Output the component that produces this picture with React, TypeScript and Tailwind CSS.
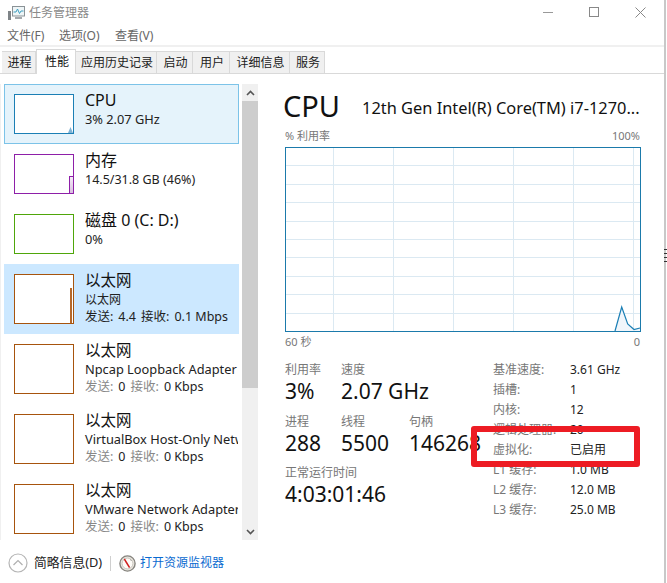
import { ReactNode } from "react";

type SideItem = {
  title: string;
  sub?: string;
  subSize?: string;
  third?: ReactNode;
  color: string;
  tall?: boolean;
  state?: "hover" | "selected";
  spark?: ReactNode;
};

const grayRate = (up: string, down: string, unit: string, dark?: boolean) => (
  <span className="flex">
    <span className={dark ? "text-[#222]" : "text-[#888]"}>发送:</span>
    <span className="ml-[5px] text-[#222]">{up}</span>
    <span className={dark ? "ml-[5px] text-[#222]" : "ml-[5px] text-[#888]"}>接收:</span>
    <span className="ml-[5px] text-[#222]">{down} {unit}</span>
  </span>
);

const items: SideItem[] = [
  {
    title: "CPU",
    sub: "3% 2.07 GHz",
    color: "border-[#1b7fb5]",
    state: "hover",
    spark: (
      <svg width="5" height="6" className="absolute bottom-0 right-0">
        <path d="M0 6 L2.5 0 L5 6 Z" fill="#7fb3d5" />
      </svg>
    ),
  },
  {
    title: "内存",
    sub: "14.5/31.8 GB (46%)",
    subSize: "text-[12.5px]",
    color: "border-[#8e1fa8]",
    spark: <div className="absolute bottom-0 right-0 w-[4px] h-[17px] bg-gradient-to-t from-[#d9bfe0] to-[#f4ecf6] border-l border-t border-[#8e1fa8]" />,
  },
  { title: "磁盘 0 (C: D:)", sub: "0%", color: "border-[#4fa60a]" },
  {
    title: "以太网",
    sub: "以太网",
    subSize: "text-[12px]",
    third: grayRate("4.4", "0.1", "Mbps", true),
    color: "border-[#a7540d]",
    tall: true,
    state: "selected",
    spark: <div className="absolute bottom-0 right-[1px] w-[2px] h-[35px] bg-[#b5682a]" />,
  },
  { title: "以太网", sub: "Npcap Loopback Adapter", third: grayRate("0", "0", "Kbps"), color: "border-[#a7540d]", tall: true },
  { title: "以太网", sub: "VirtualBox Host-Only Network", third: grayRate("0", "0", "Kbps"), color: "border-[#a7540d]", tall: true },
  { title: "以太网", sub: "VMware Network Adapter", third: grayRate("0", "0", "Kbps"), color: "border-[#a7540d]", tall: true },
];

const tabs = [
  { label: "进程", w: "w-[34px]" },
  { label: "性能", w: "w-[40px]", active: true },
  { label: "应用历史记录", w: "w-[81px]" },
  { label: "启动", w: "w-[36px]" },
  { label: "用户", w: "w-[37px]" },
  { label: "详细信息", w: "w-[60px]" },
  { label: "服务", w: "w-[35px]" },
];

const specs = [
  ["基准速度:", "3.61 GHz"],
  ["插槽:", "1"],
  ["内核:", "12"],
  ["逻辑处理器:", "20"],
  ["虚拟化:", "已启用"],
  ["L1 缓存:", "1.0 MB"],
  ["L2 缓存:", "12.0 MB"],
  ["L3 缓存:", "25.0 MB"],
];

const SideRow = ({ item }: { item: SideItem }) => {
  const bg =
    item.state === "hover"
      ? "bg-[#e5f3fb] border border-[#7cc3e8]"
      : item.state === "selected"
        ? "bg-[#cce8ff] border border-[#cce8ff]"
        : "border border-transparent";
  return (
    <div className={`flex shrink-0 w-[235px] overflow-hidden pl-[9px] pt-[9px] ${item.tall ? "h-[70px]" : "h-[60px]"} ${bg}`}>
      <div className={`relative shrink-0 w-[60px] border bg-white ${item.tall ? "h-[50px]" : "h-[40px]"} ${item.color}`}>
        {item.spark}
      </div>
      <div className="ml-[11px] -mt-[5px] whitespace-nowrap">
        <div className={`leading-[22px] text-[#111] ${item.tall ? "text-[15.5px]" : "text-[16px]"}`}>{item.title}</div>
        <div className={`leading-[17px] text-[#222] ${item.subSize ?? "text-[12.8px]"}`}>{item.sub}</div>
        {item.third && <div className="text-[12.5px] leading-[17px]">{item.third}</div>}
      </div>
    </div>
  );
};

const Stat = ({ label, value, w }: { label: string; value: string; w: string }) => (
  <div className={`shrink-0 whitespace-nowrap ${w}`}>
    <div className="text-[12px] leading-[16px] text-[#777]">{label}</div>
    <div className="text-[21px] leading-[26px] text-[#111]">{value}</div>
  </div>
);

const CpuChart = () => (
  <svg width="356" height="185" className="block">
    <rect x="0.5" y="0.5" width="355" height="184" fill="#ffffff" />
    {[48, 108, 168, 228, 288, 348].map((x) => (
      <line key={x} x1={x + 0.5} y1="1" x2={x + 0.5} y2="184" stroke="#dbe9f2" />
    ))}
    {[1, 2, 3, 4, 5, 6, 7, 8, 9].map((n) => (
      <line key={n} x1="1" y1={Math.round(n * 18.4) + 0.5} x2="355" y2={Math.round(n * 18.4) + 0.5} stroke="#dbe9f2" />
    ))}
    <path d="M330 184 L336.7 160 L342.7 177 L349 182.5 L355 181 L355 184 Z" fill="#f1f6fb" stroke="none" />
    <path d="M330 184 L336.7 160 L342.7 177 L349 182.5 L355 181" fill="none" stroke="#1b7fb5" strokeWidth="1.2" />
    <rect x="0.5" y="0.5" width="355" height="184" fill="none" stroke="#1b7aab" />
  </svg>
);

const AppIcon = () => (
  <svg width="17" height="14" viewBox="0 0 17 14" className="shrink-0">
    <rect x="4.5" y="0.5" width="12" height="9.5" fill="#eef5f7" stroke="#8a9296" />
    <path d="M5.5 6 L8 6 L9.5 3 L11.5 7.5 L13 5 L15.5 5" fill="none" stroke="#3f9fc0" strokeWidth="1" />
    <rect x="0" y="5" width="3" height="9" fill="#7f8488" />
    <rect x="7" y="11" width="7" height="2" fill="#a4a9ad" />
  </svg>
);

const MonitorIcon = () => (
  <svg width="17" height="17" viewBox="0 0 17 17" className="shrink-0">
    <circle cx="8.5" cy="8.5" r="7.6" fill="#e9e6df" stroke="#85837d" strokeWidth="1.4" />
    <circle cx="8.5" cy="8.5" r="5.4" fill="#fdfbf7" stroke="#b9b5ac" strokeWidth="0.7" />
    <path d="M5.3 4 L10.6 12.6" stroke="#d0201f" strokeWidth="1.5" />
    <path d="M11.5 4.6 L12.2 5.6" stroke="#777" strokeWidth="1" />
  </svg>
);

export default function App() {
  return (
    <div className="relative w-[667px] h-[583px] overflow-hidden bg-white font-['Noto_Sans','Noto_Sans_CJK_SC',sans-serif]">
      <div className="w-[666px] h-[583px] border-r-2 border-[#c8c8c8] flex flex-col">
        {/* title bar */}
        <div className="flex items-center h-[24px] shrink-0 pl-2 pt-[1px]">
          <AppIcon />
          <span className="ml-[4px] text-[12px] text-[#8a8a8a]">任务管理器</span>
          <div className="ml-auto flex items-center">
            <svg width="11" height="11" className="mr-[35px]"><line x1="0" y1="5.5" x2="10" y2="5.5" stroke="#999" /></svg>
            <svg width="11" height="11" className="mr-[35px]"><rect x="0.5" y="0.5" width="9" height="9" fill="none" stroke="#888" /></svg>
            <svg width="11" height="11" className="mr-[18px]"><path d="M0.5 0.5 L10.5 10.5 M10.5 0.5 L0.5 10.5" stroke="#888" /></svg>
          </div>
        </div>
        {/* menu */}
        <div className="flex items-center h-[21px] shrink-0 pl-[7px] pt-[3px] text-[12px] text-[#666]">
          <span className="w-[52px]">文件(F)</span>
          <span className="w-[56px]">选项(O)</span>
          <span>查看(V)</span>
        </div>
        <div className="h-[2px] shrink-0 bg-[#f0f0f0]" />
        {/* tabs */}
        <div className="flex items-end h-[27px] shrink-0 pl-[2px] border-b border-[#d9d9d9]">
          {tabs.map((t) => (
            <div
              key={t.label}
              className={`${t.w} flex items-center justify-center pl-[2px] text-[12px] border-t border-r border-[#d9d9d9] ${
                t.active ? "h-[25px] -mb-[1px] bg-white border-l text-[#111]" : "h-[22px] bg-[#f0f0f0] text-[#222]"
              }`}
            >
              {t.label}
            </div>
          ))}
        </div>
        {/* body */}
        <div className="flex flex-1 min-h-0">
          <div className="w-[258px] shrink-0 pt-[10px]">
            <div className="flex h-[456px] pl-[3px] border-l border-[#f0f0f0]">
              <div className="w-[238px] h-[456px] overflow-hidden">
                {items.map((it, i) => (
                  <SideRow key={i} item={it} />
                ))}
              </div>
              <div className="w-[16px] flex flex-col bg-[#f0f0f0]">
                <div className="h-[17px] flex items-center justify-center">
                  <svg width="9" height="6"><path d="M1 5 L4.5 1.5 L8 5" fill="none" stroke="#555" strokeWidth="1.6" /></svg>
                </div>
                <div className="h-[287px] bg-[#cdcdcd]" />
                <div className="flex-1" />
                <div className="h-[17px] flex items-center justify-center">
                  <svg width="9" height="6"><path d="M1 1 L4.5 4.5 L8 1" fill="none" stroke="#555" strokeWidth="1.6" /></svg>
                </div>
              </div>
            </div>
            {/* footer */}
            <div className="flex items-center h-[43px] pt-[3px] w-[400px] whitespace-nowrap">
              <svg width="20" height="20" viewBox="0 0 20 20" className="ml-[8px] shrink-0">
                <circle cx="10" cy="10" r="9" fill="none" stroke="#b5b5b5" strokeWidth="1.2" />
                <path d="M5.5 12 L10 7.5 L14.5 12" fill="none" stroke="#b0b0b0" strokeWidth="1.2" />
              </svg>
              <span className="ml-[6px] w-[68px] text-[12.8px] text-[#222]">简略信息(D)</span>
              <div className="ml-[8px] w-px h-[15px] bg-[#cfcfcf]" />
              <div className="ml-[8px]"><MonitorIcon /></div>
              <span className="ml-[4px] text-[12px] text-[#0a6ad0]">打开资源监视器</span>
            </div>
          </div>
          {/* detail */}
          <div className="flex-1 min-w-0 pl-[27px] pt-[14px] h-[500px]">
            <div className="flex items-center h-[36px] whitespace-nowrap">
              <span className="w-[79px] text-[29px] leading-[36px] text-[#111] -ml-[2px]">CPU</span>
              <span className="mt-[5px] text-[16.4px] text-[#111]">12th Gen Intel(R) Core(TM) i7-1270...</span>
            </div>
            <div className="flex justify-between w-[355px] h-[20px] items-end text-[11px] leading-[16px] text-[#777]">
              <span>% 利用率</span>
              <span>100%</span>
            </div>
            <div className="mt-[3px]"><CpuChart /></div>
            <div className="flex justify-between w-[355px] h-[16px] mt-[2px] text-[11px] leading-[16px] text-[#777]">
              <span>60 秒</span>
              <span>0</span>
            </div>
            <div className="flex mt-[12px]">
              <div className="w-[208px] shrink-0">
                <div className="flex">
                  <Stat label="利用率" value="3%" w="w-[56px]" />
                  <Stat label="速度" value="2.07 GHz" w="w-[120px]" />
                </div>
                <div className="flex mt-[10px]">
                  <Stat label="进程" value="288" w="w-[56px]" />
                  <Stat label="线程" value="5500" w="w-[68px]" />
                  <Stat label="句柄" value="146268" w="w-[80px]" />
                </div>
                <div className="mt-[9px]">
                  <Stat label="正常运行时间" value="4:03:01:46" w="w-[160px]" />
                </div>
              </div>
              <div className="-mt-[2px]">
                {specs.map(([k, v]) => (
                  <div key={k} className="flex items-center h-[20px] text-[12px] whitespace-nowrap">
                    <span className="w-[77px] text-[#777]">{k}</span>
                    <span className="text-[#222]">{v}</span>
                  </div>
                ))}
              </div>
            </div>
          </div>
        </div>
      </div>
      {/* red annotation box */}
      <div className="absolute left-[471px] top-[426px] w-[169px] h-[41px] border-[6px] border-[#ed1c24] rounded-[3px]" />
      {/* bits of the window behind, at the right edge */}
      <div className="absolute left-[664px] top-[249px] w-[3px] flex flex-col gap-[3px]">
        <div className="h-px bg-[#333]" />
        <div className="h-px bg-[#333]" />
        <div className="h-px bg-[#333]" />
        <div className="h-px bg-[#333]" />
      </div>
    </div>
  );
}
